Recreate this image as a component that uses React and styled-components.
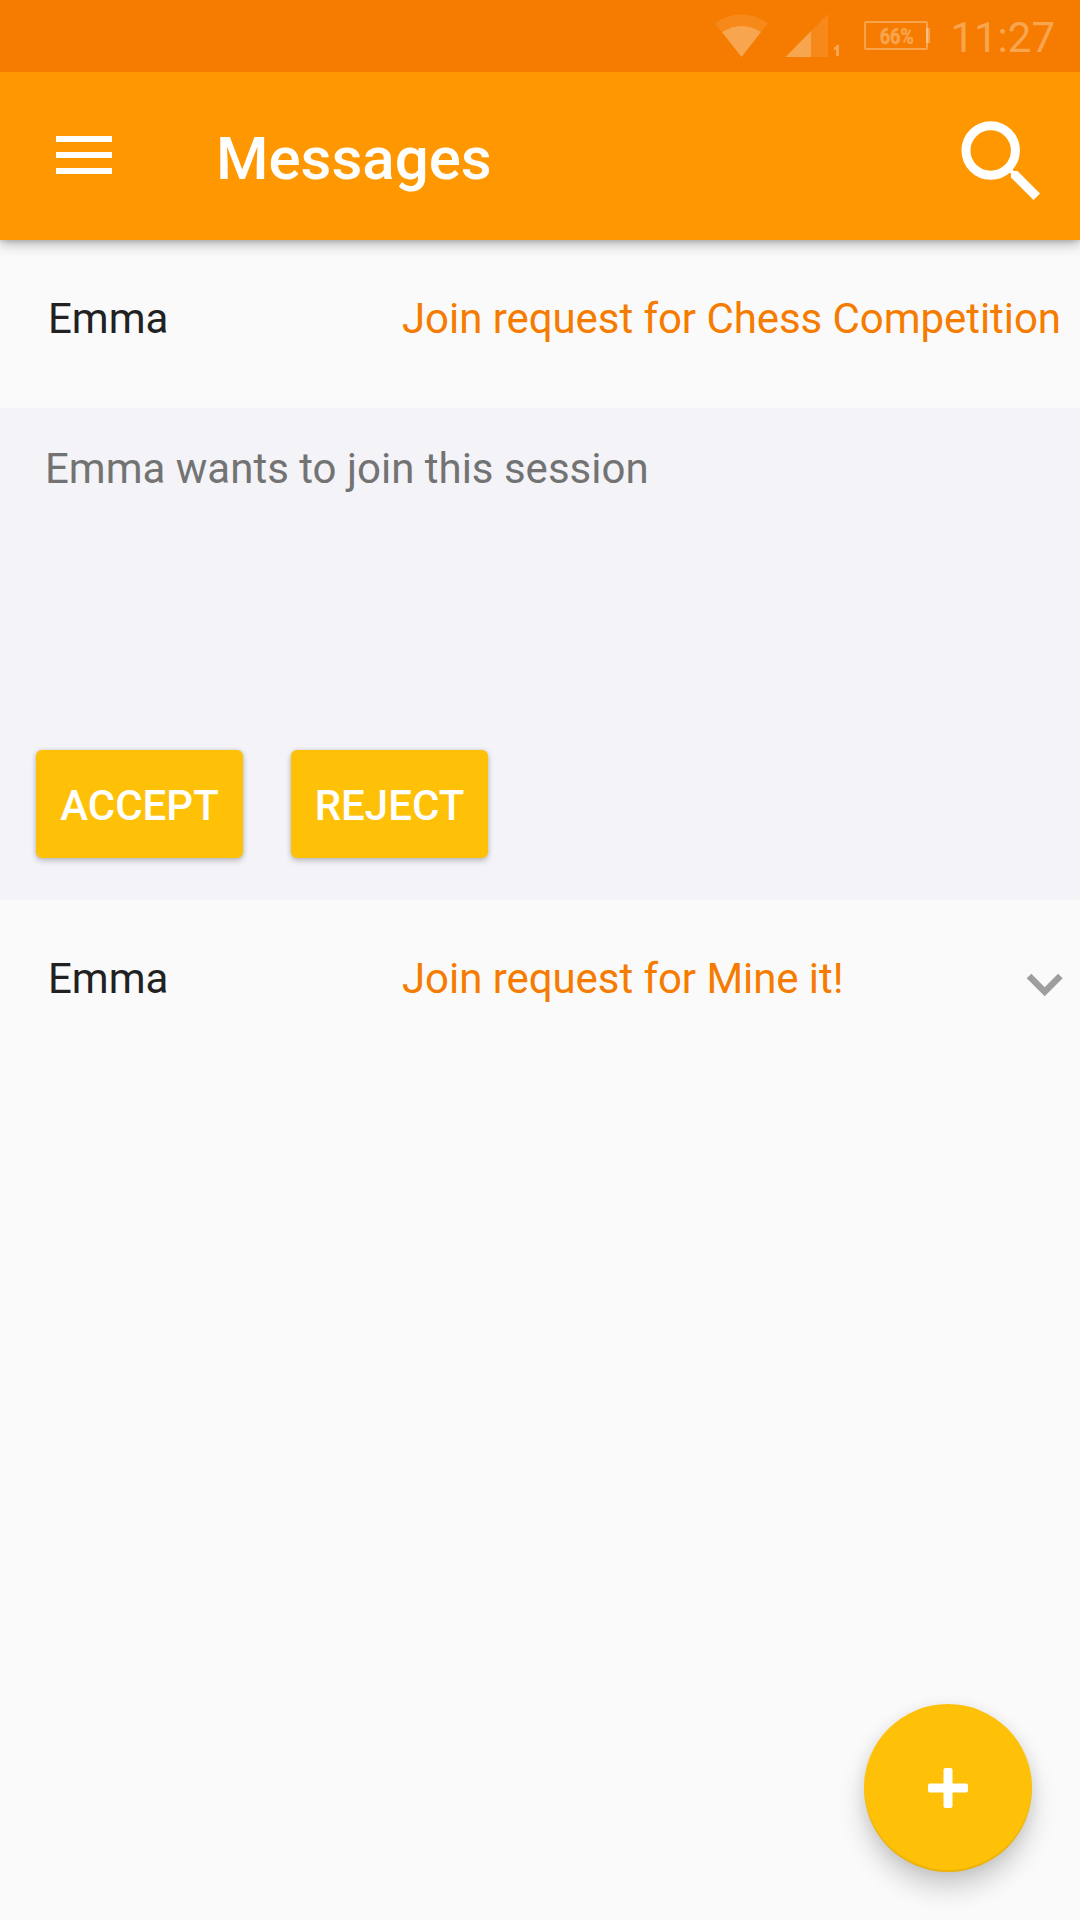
import React from "react";
import styled, { createGlobalStyle } from "styled-components";

const GlobalStyle = createGlobalStyle`
  *, *::before, *::after { box-sizing: border-box; }
  body { margin: 0; background: #fafafa; font-family: Roboto, "Noto Sans", sans-serif; }
`;

const Screen = styled.div`
  position: relative;
  display: flex;
  flex-direction: column;
  width: 1080px;
  height: 1920px;
  overflow: hidden;
  background: #fafafa;
`;

const StatusBar = styled.header`
  position: relative;
  z-index: 2;
  display: flex;
  align-items: flex-start;
  height: 72px;
  padding: 13px 25px 0 714px;
  background: #f57c00;
`;

const WifiIcon = styled.svg`
  width: 55px;
  height: 45px;
`;

const SignalIcon = styled.svg`
  width: 55px;
  height: 45px;
  margin-left: 16px;
`;

const Battery = styled.div`
  position: relative;
  display: flex;
  align-items: center;
  justify-content: center;
  width: 64px;
  height: 29px;
  margin: 8px 0 0 24px;
  border: 2px solid rgba(255, 255, 255, 0.3);
  border-radius: 2px;

  &::after {
    content: "";
    position: absolute;
    top: 5px;
    right: -4px;
    width: 4px;
    height: 15px;
    background: rgba(255, 255, 255, 0.3);
  }
`;

const BatteryLevel = styled.span`
  color: #f9a44e;
  font-size: 22px;
  font-weight: 700;
  line-height: 26px;
  -webkit-text-stroke: 0.5px #f9a44e;
  transform: translate(1px, 1px) scaleX(0.82);
`;

const Clock = styled.time`
  margin-left: auto;
  color: #f9a54f;
  font-size: 42px;
  line-height: 50px;
`;

const Toolbar = styled.div`
  position: relative;
  z-index: 1;
  display: flex;
  align-items: center;
  height: 168px;
  padding: 0 40px 0 56px;
  background: #ff9800;
  box-shadow: 0 4px 12px rgba(0, 0, 0, 0.28), 0 1px 5px rgba(0, 0, 0, 0.16);
`;

const IconButton = styled.button`
  display: flex;
  padding: 0;
  border: 0;
  background: none;
  color: #fff;
`;

const MenuIcon = styled.svg`
  width: 56px;
  height: 38px;
  margin-top: -3px;
`;

const SearchIcon = styled.svg`
  width: 79px;
  height: 79px;
  margin-top: 8px;
`;

const Title = styled.h1`
  flex: 1;
  margin: 6px 0 0 104px;
  color: #fff;
  font-size: 60px;
  font-weight: 500;
  line-height: 70px;
`;

const MessageRow = styled.div`
  display: flex;
  height: 168px;
  padding: 54px 16px 0 48px;
  font-size: 42px;
  line-height: 50px;
  white-space: nowrap;
`;

const Sender = styled.span`
  width: 354px;
  color: #212121;
`;

const Subject = styled.span`
  flex: 1;
  color: #f57c00;
  letter-spacing: -0.06px;
`;

const Chevron = styled.svg`
  width: 38px;
  height: 24px;
  margin-top: 19px;
`;

const Details = styled.section`
  display: flex;
  flex-direction: column;
  justify-content: space-between;
  height: 492px;
  padding: 36px 36px 42px;
  background: #f3f3f8;
`;

const Body = styled.p`
  margin: 0;
  padding-left: 9px;
  color: #737373;
  font-size: 42px;
  line-height: 50px;
`;

const Actions = styled.div`
  display: flex;
  gap: 48px;
`;

const ActionButton = styled.button`
  width: ${({ $width }) => $width}px;
  height: 108px;
  padding: 4px 0 0;
  border: 0;
  border-radius: 6px;
  background: #ffc107;
  color: #fff;
  font: 500 42px/50px Roboto, sans-serif;
  box-shadow: 0 3px 6px rgba(0, 0, 0, 0.2), 0 0 4px rgba(0, 0, 0, 0.12);
`;

const Fab = styled.button`
  position: absolute;
  right: 48px;
  bottom: 48px;
  display: flex;
  align-items: center;
  justify-content: center;
  width: 168px;
  height: 168px;
  padding: 0;
  border: 0;
  border-radius: 50%;
  background: #ffc107;
  box-shadow: inset 0 -2px 1px rgba(120, 90, 0, 0.15), 0 16px 26px rgba(0, 0, 0, 0.18),
    0 2px 14px rgba(0, 0, 0, 0.08);
`;

const PlusIcon = styled.svg`
  width: 40px;
  height: 40px;
`;

function StatusIcons() {
  return (
    <>
      <WifiIcon viewBox="0 0 55 45" fill="#fff" aria-hidden="true">
        <path d="M1 10.5C16-1.5 39-1.5 54 10.5L27.5 44Z" opacity=".1" />
        <path d="M8 19Q27.5 7 47 19L27.5 44Z" opacity=".24" />
      </WifiIcon>
      <SignalIcon viewBox="0 0 55 45" fill="#fff" aria-hidden="true">
        <path d="M0.500 44L43 1V44Z" opacity=".1" />
        <path d="M0.500 44L26 18V44Z" opacity=".24" />
        <path d="M51 32H54V43H51V37H49V34H51Z" opacity=".3" />
      </SignalIcon>
      <Battery>
        <BatteryLevel>66%</BatteryLevel>
      </Battery>
    </>
  );
}

function Message({ sender, subject, collapsed }) {
  return (
    <MessageRow>
      <Sender>{sender}</Sender>
      <Subject>{subject}</Subject>
      {collapsed && (
        <Chevron viewBox="0 0 38 24" aria-hidden="true">
          <path d="M3 3L18.700 18.700L34.400 3" fill="none" stroke="#9e9e9e" strokeWidth="6.500" />
        </Chevron>
      )}
    </MessageRow>
  );
}

export default function App() {
  return (
    <Screen>
      <GlobalStyle />
      <StatusBar>
        <StatusIcons />
        <Clock>11:27</Clock>
      </StatusBar>
      <Toolbar>
        <IconButton aria-label="Menu">
          <MenuIcon viewBox="0 0 56 38" fill="currentColor">
            <path d="M0 0H56V6H0ZM0 16H56V22H0ZM0 32H56V38H0Z" />
          </MenuIcon>
        </IconButton>
        <Title>Messages</Title>
        <IconButton aria-label="Search">
          <SearchIcon viewBox="0 0 79 79" fill="none" stroke="currentColor">
            <circle cx="29.700" cy="29.500" r="24.700" strokeWidth="9" />
            <path d="M47 47L53.500 53.500" strokeWidth="4" />
            <path d="M50 50H56.500L79 72.500L72.500 79L50 56.500Z" fill="currentColor" stroke="none" />
          </SearchIcon>
        </IconButton>
      </Toolbar>
      <main>
        <Message sender="Emma" subject="Join request for Chess Competition" />
        <Details>
          <Body>Emma wants to join this session</Body>
          <Actions>
            <ActionButton $width={207}>ACCEPT</ActionButton>
            <ActionButton $width={197}>REJECT</ActionButton>
          </Actions>
        </Details>
        <Message sender="Emma" subject="Join request for Mine it!" collapsed />
      </main>
      <Fab aria-label="Add">
        <PlusIcon viewBox="0 0 40 40" fill="#fff">
          <rect x="15.500" width="9" height="40" rx="2" />
          <rect y="15.500" width="40" height="9" rx="2" />
        </PlusIcon>
      </Fab>
    </Screen>
  );
}
